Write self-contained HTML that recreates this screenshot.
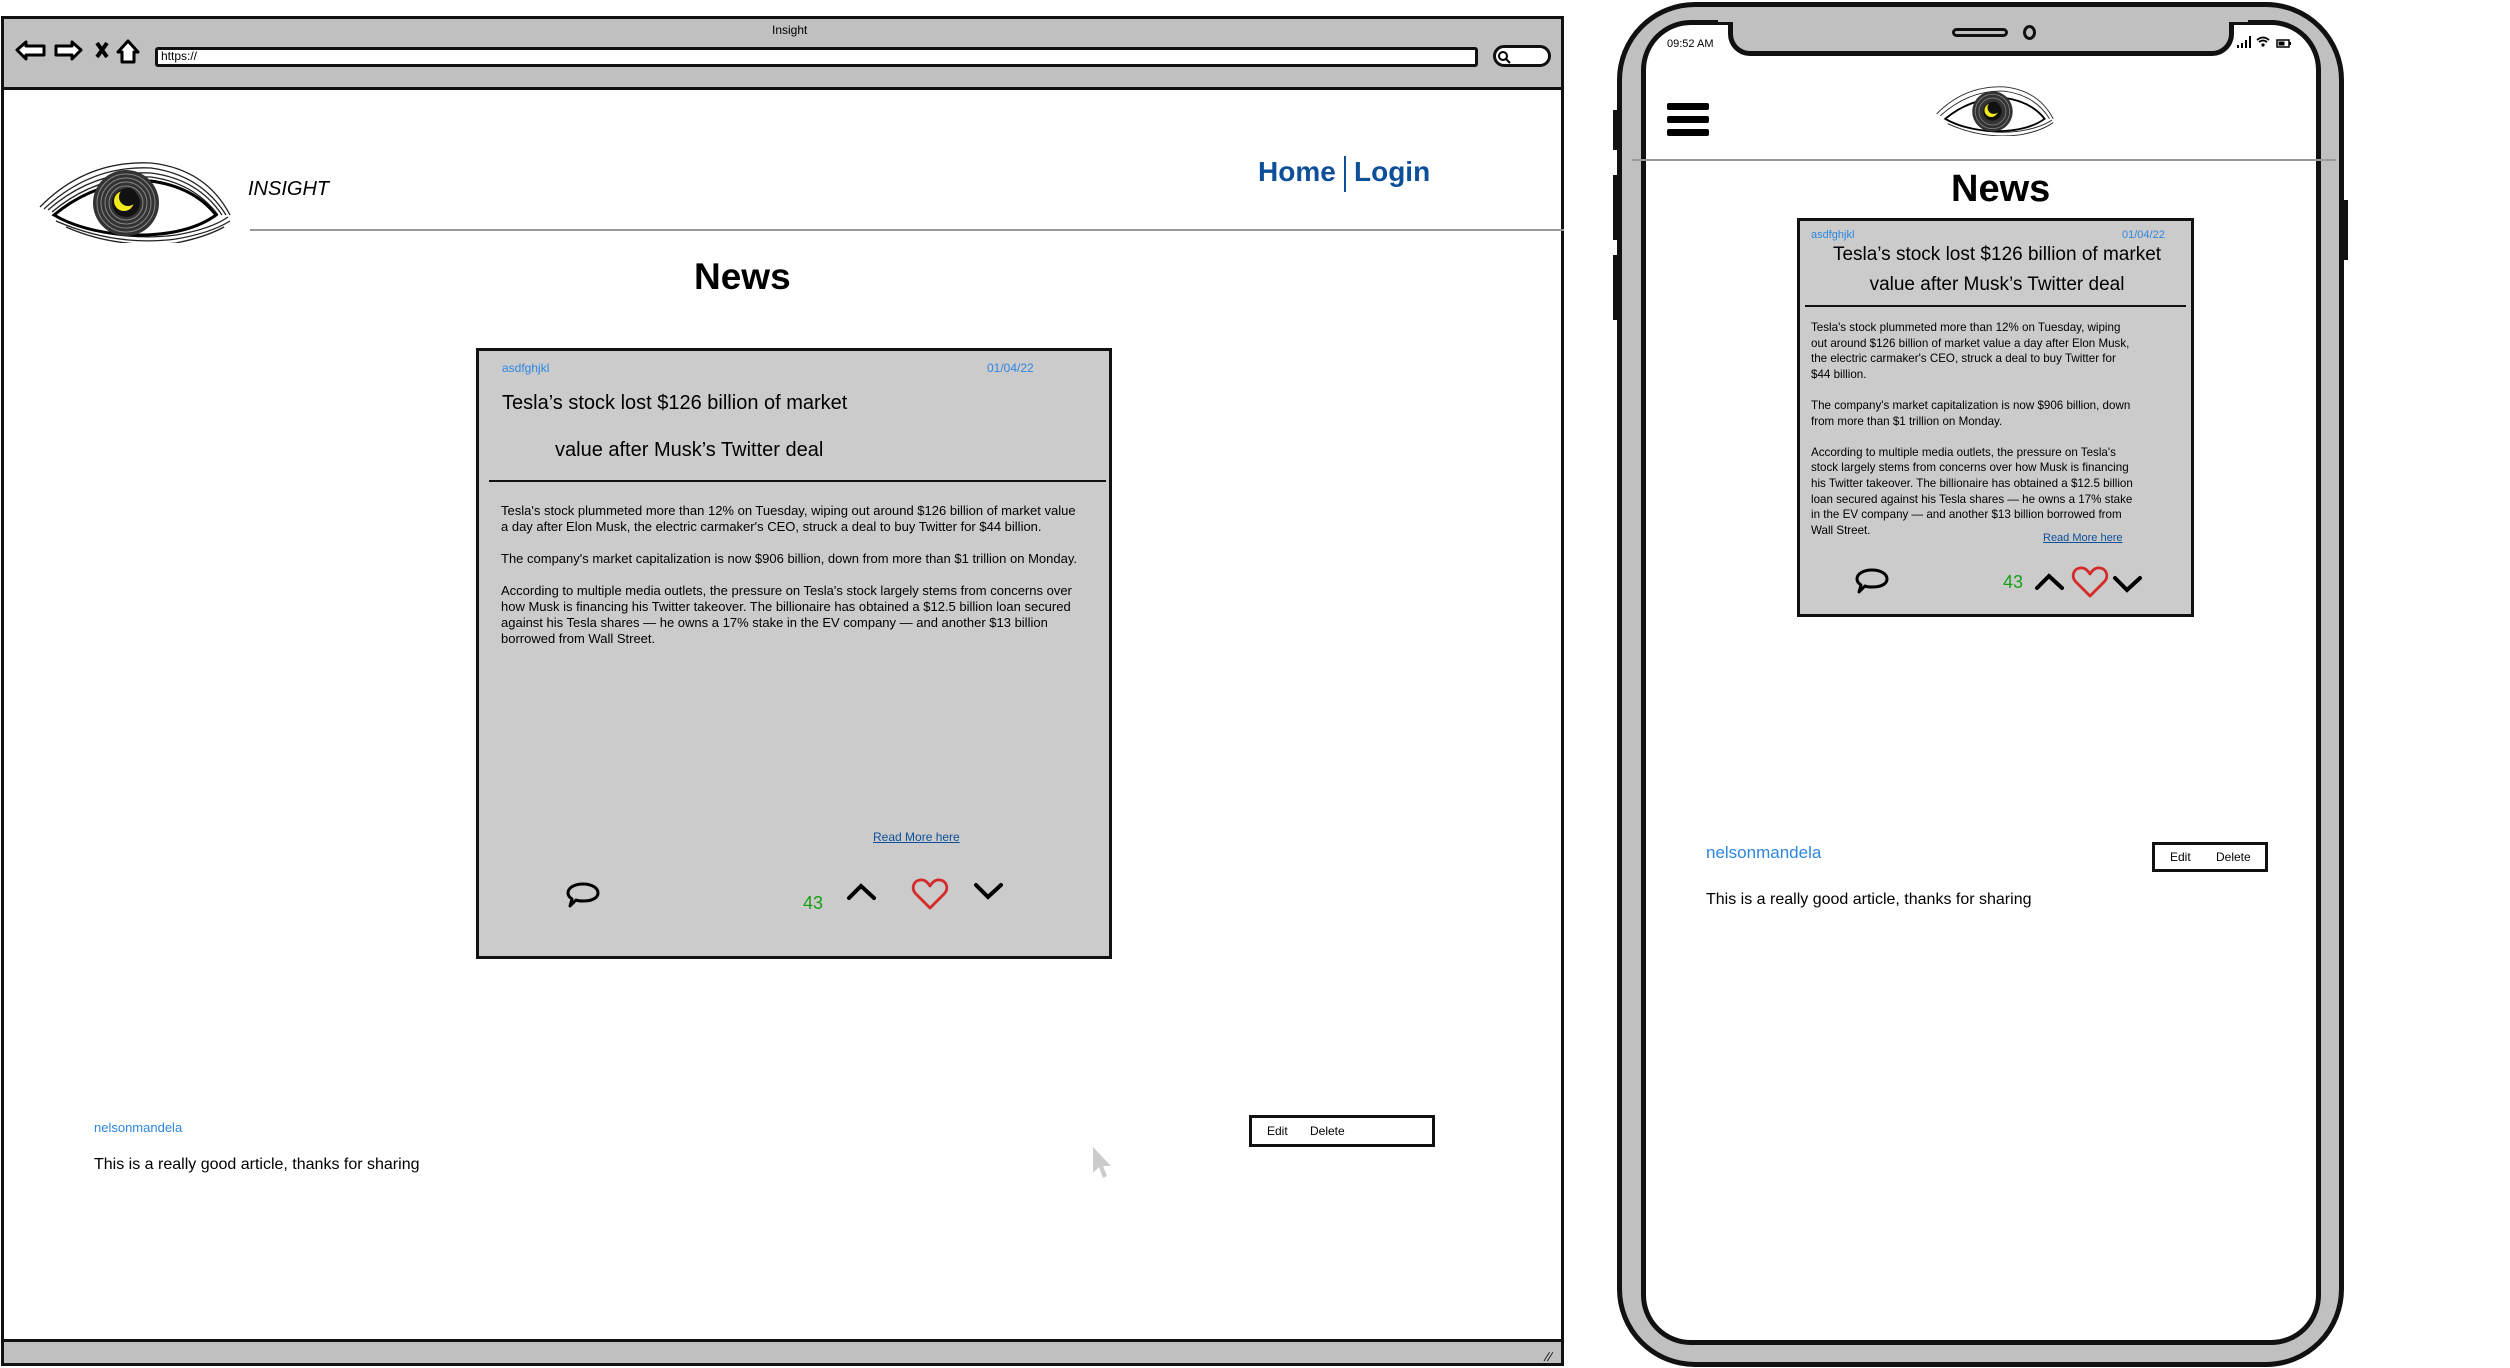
<!DOCTYPE html>
<html><head><meta charset="utf-8"><style>
*{margin:0;padding:0;box-sizing:border-box}
body{width:2510px;height:1368px;background:#fff;position:relative;overflow:hidden;font-family:"Liberation Sans",sans-serif;color:#000}
.a{position:absolute;white-space:nowrap}
.blue{color:#2e86e0}
.body{font-size:13px;line-height:16px}
</style></head><body>

<!-- Browser frame -->
<div class="a" style="left:1px;top:16px;width:1563px;height:1350px;border:3px solid #111;background:#fff"></div>
<div class="a" style="left:1px;top:16px;width:1563px;height:74px;border:3px solid #111;background:#c0c0c0"></div>
<div class="a" style="left:1px;top:1339px;width:1563px;height:27px;border:3px solid #111;background:#c0c0c0"></div>
<div class="a" style="left:1545px;top:1350px;font-size:12px;transform:skewX(-20deg)">//</div>
<div class="a" style="left:772px;top:23px;font-size:12px">Insight</div>
<svg class="a" style="left:12px;top:38px" width="135" height="28" viewBox="0 0 135 28">
<path d="M5 12 L14 4 L14 8 L32 8 L32 17 L14 17 L14 21 Z" fill="#fff" stroke="#000" stroke-width="3" stroke-linejoin="round"/>
<path d="M69 12 L60 4 L60 8 L44 8 L44 17 L60 17 L60 21 Z" fill="#fff" stroke="#000" stroke-width="3" stroke-linejoin="round"/>
<path d="M85 5 L95 19 M95 5 L85 19" stroke="#000" stroke-width="4"/>
<path d="M116 3 L106 14 L110 14 L110 24 L122 24 L122 14 L126 14 Z" fill="#fff" stroke="#000" stroke-width="3" stroke-linejoin="round"/>
</svg>
<div class="a" style="left:155px;top:47px;width:1323px;height:20px;border:3px solid #111;border-radius:3px;background:#fff"></div>
<div class="a" style="left:161px;top:49px;font-size:12px">https://</div>
<div class="a" style="left:1493px;top:45px;width:58px;height:22px;border:3px solid #111;border-radius:11px;background:#fff"></div>
<svg class="a" style="left:1497px;top:50px" width="14" height="14"><circle cx="6" cy="6" r="4" fill="none" stroke="#000" stroke-width="2"/><path d="M9 9 L13 13" stroke="#000" stroke-width="2"/></svg>

<!-- eye logo browser -->
<svg class="a" style="left:36px;top:155px" width="195" height="88" viewBox="0 0 195 88">
<g fill="none" stroke="#222" stroke-width="1.3">
<path d="M4 52 Q50 5 115 8 Q170 14 194 60"/>
<path d="M8 54 Q55 10 115 13 Q165 20 190 60"/>
<path d="M12 55 Q58 15 115 18 Q162 24 186 60"/>
<path d="M16 57 Q60 20 115 22 Q158 28 182 60"/>
<path d="M20 60 Q60 28 115 27 Q155 32 178 60"/>
<path d="M24 62 Q80 88 140 80 Q175 74 192 62"/>
<path d="M20 66 Q80 92 140 84 Q175 78 194 66"/>
<path d="M30 72 Q80 94 140 88 Q170 82 188 72"/>
</g>
<path d="M18 60 Q60 25 115 26 Q158 32 180 60 Q150 82 90 80 Q45 76 18 60 Z" fill="#fff" stroke="#000" stroke-width="3"/>
<circle cx="90" cy="48" r="33" fill="#333"/>
<g fill="none" stroke="#888" stroke-width="1"><circle cx="90" cy="48" r="29"/><circle cx="90" cy="48" r="25"/><circle cx="90" cy="48" r="21"/><circle cx="90" cy="48" r="17"/></g>
<circle cx="90" cy="48" r="14" fill="#111"/>
<circle cx="88" cy="46" r="10" fill="#f2ea1a"/>
<circle cx="92" cy="42" r="9" fill="#111"/>
</svg>
<div class="a" style="left:248px;top:178px;font-size:20px;font-style:italic">INSIGHT</div>
<div class="a" style="left:1258px;top:156px;font-size:28px;font-weight:bold;color:#0d4f99">Home</div>
<div class="a" style="left:1344px;top:156px;width:2px;height:36px;background:#0d4f99"></div>
<div class="a" style="left:1354px;top:156px;font-size:28px;font-weight:bold;color:#0d4f99">Login</div>
<div class="a" style="left:250px;top:229px;width:1314px;height:2px;background:#999"></div>
<div class="a" style="left:694px;top:256px;font-size:37px;font-weight:bold">News</div>

<!-- card browser -->
<div class="a" style="left:476px;top:348px;width:636px;height:611px;border:3px solid #111;background:#cbcbcb"></div>
<div class="a blue" style="left:502px;top:361px;font-size:12px">asdfghjkl</div>
<div class="a blue" style="left:987px;top:361px;font-size:12px">01/04/22</div>
<div class="a" style="left:502px;top:392px;font-size:20px">Tesla’s stock lost $126 billion of market</div>
<div class="a" style="left:555px;top:439px;font-size:20px">value after Musk’s Twitter deal</div>
<div class="a" style="left:489px;top:480px;width:617px;height:2px;background:#111"></div>
<div class="a body" style="left:501px;top:503px">Tesla's stock plummeted more than 12% on Tuesday, wiping out around $126 billion of market value<br>a day after Elon Musk, the electric carmaker's CEO, struck a deal to buy Twitter for $44 billion.<br><br>The company's market capitalization is now $906 billion, down from more than $1 trillion on Monday.<br><br>According to multiple media outlets, the pressure on Tesla's stock largely stems from concerns over<br>how Musk is financing his Twitter takeover. The billionaire has obtained a $12.5 billion loan secured<br>against his Tesla shares — he owns a 17% stake in the EV company — and another $13 billion<br>borrowed from Wall Street.</div>
<div class="a" style="left:873px;top:830px;font-size:12px;color:#0d4f99;text-decoration:underline">Read More here</div>
<svg class="a" style="left:566px;top:881px" width="34" height="28" viewBox="0 0 34 28"><path d="M17 3 C26 3 32 7 32 12 C32 17 26 20 17 20 C14 20 12 20 10 19 L4 25 L6 18 C3 16 2 14 2 12 C2 7 8 3 17 3 Z" fill="none" stroke="#000" stroke-width="3" stroke-linejoin="round"/></svg>
<div class="a" style="left:803px;top:893px;font-size:18px;color:#17a017">43</div>
<svg class="a" style="left:846px;top:882px" width="32" height="20"><path d="M3 16 L15 4 L28 16" fill="none" stroke="#000" stroke-width="4" stroke-linecap="round"/></svg>
<svg class="a" style="left:911px;top:877px" width="38" height="34" viewBox="0 0 38 34"><path d="M19 31 L5 17 C0 12 2 4 9 3 C14 2 17 6 19 9 C21 6 24 2 29 3 C36 4 38 12 33 17 Z" fill="none" stroke="#d42a2a" stroke-width="2.8" stroke-linejoin="round"/></svg>
<svg class="a" style="left:973px;top:881px" width="32" height="20"><path d="M3 4 L15 16 L28 4" fill="none" stroke="#000" stroke-width="4" stroke-linecap="round"/></svg>

<div class="a blue" style="left:94px;top:1120px;font-size:13px">nelsonmandela</div>
<div class="a" style="left:94px;top:1156px;font-size:16px">This is a really good article, thanks for sharing</div>
<div class="a" style="left:1249px;top:1115px;width:186px;height:32px;border:3px solid #111;background:#fff"></div>
<div class="a" style="left:1267px;top:1124px;font-size:12px">Edit</div>
<div class="a" style="left:1310px;top:1124px;font-size:12px">Delete</div>
<svg class="a" style="left:1090px;top:1145px" width="24" height="36"><path d="M3 2 L3 28 L9 22 L13 33 L17 31 L13 21 L21 21 Z" fill="#ccc"/></svg>

<!-- Phone -->
<div class="a" style="left:1617px;top:2px;width:727px;height:1365px;border:5px solid #111;border-radius:78px;background:#c0c0c0"></div>
<div class="a" style="left:1613px;top:110px;width:6px;height:40px;background:#111"></div>
<div class="a" style="left:1613px;top:175px;width:6px;height:65px;background:#111"></div>
<div class="a" style="left:1613px;top:255px;width:6px;height:65px;background:#111"></div>
<div class="a" style="left:2342px;top:200px;width:6px;height:60px;background:#111"></div>
<div class="a" style="left:1641px;top:20px;width:680px;height:1325px;border:5px solid #111;border-radius:50px;background:#fff"></div>
<div class="a" style="left:1728px;top:14px;width:506px;height:42px;border:5px solid #111;border-top:none;border-radius:0 0 22px 22px;background:#c0c0c0"></div>
<div class="a" style="left:1718px;top:12px;width:530px;height:10px;background:#c0c0c0"></div>
<div class="a" style="left:1952px;top:28px;width:56px;height:9px;border:3px solid #111;border-radius:5px;background:#c0c0c0"></div>
<div class="a" style="left:2023px;top:25px;width:13px;height:15px;border:3px solid #111;border-radius:50%"></div>
<div class="a" style="left:1667px;top:38px;font-size:11px">09:52 AM</div>
<svg class="a" style="left:2236px;top:34px" width="60" height="16"><g fill="#000"><rect x="1" y="11" width="2" height="3"/><rect x="5" y="9" width="2" height="5"/><rect x="9" y="6" width="2" height="8"/><rect x="13" y="2" width="2" height="12"/></g><path d="M21 6 Q27 1 33 6 M23 8 Q27 5 31 8" fill="none" stroke="#000" stroke-width="1.8"/><circle cx="27" cy="11" r="1.6"/><rect x="41" y="6" width="12" height="7" fill="none" stroke="#000" stroke-width="1.5"/><rect x="42.5" y="7.5" width="6" height="4"/><rect x="53" y="8" width="2" height="3"/></svg>
<div class="a" style="left:1667px;top:103px;width:42px;height:7px;background:#000;border-radius:2px"></div>
<div class="a" style="left:1667px;top:116px;width:42px;height:7px;background:#000;border-radius:2px"></div>
<div class="a" style="left:1667px;top:129px;width:42px;height:7px;background:#000;border-radius:2px"></div>
<svg class="a" style="left:1934px;top:82px" width="120" height="54" viewBox="0 0 195 88">
<g fill="none" stroke="#222" stroke-width="1.5">
<path d="M4 52 Q50 5 115 8 Q170 14 194 60"/><path d="M10 55 Q58 12 115 15 Q165 22 188 60"/><path d="M24 62 Q80 88 140 80 Q175 74 192 62"/><path d="M22 68 Q80 94 140 86 Q175 80 194 66"/></g>
<path d="M18 60 Q60 25 115 26 Q158 32 180 60 Q150 82 90 80 Q45 76 18 60 Z" fill="#fff" stroke="#000" stroke-width="3"/>
<circle cx="95" cy="48" r="33" fill="#333"/>
<g fill="none" stroke="#888" stroke-width="1.2"><circle cx="95" cy="48" r="28"/><circle cx="95" cy="48" r="22"/></g>
<circle cx="95" cy="48" r="15" fill="#111"/>
<circle cx="93" cy="46" r="11" fill="#f2ea1a"/>
<circle cx="97" cy="42" r="10" fill="#111"/>
</svg>
<div class="a" style="left:1632px;top:159px;width:704px;height:2px;background:#999"></div>
<div class="a" style="left:1951px;top:168px;font-size:38px;font-weight:bold">News</div>

<div class="a" style="left:1797px;top:218px;width:397px;height:399px;border:3px solid #111;background:#cbcbcb"></div>
<div class="a blue" style="left:1811px;top:229px;font-size:11px">asdfghjkl</div>
<div class="a blue" style="left:2122px;top:229px;font-size:11px">01/04/22</div>
<div class="a" style="left:1803px;top:244px;width:388px;text-align:center;font-size:19px">Tesla’s stock lost $126 billion of market</div>
<div class="a" style="left:1803px;top:274px;width:388px;text-align:center;font-size:19px">value after Musk’s Twitter deal</div>
<div class="a" style="left:1805px;top:305px;width:381px;height:2px;background:#111"></div>
<div class="a" style="left:1811px;top:320px;font-size:11.6px;line-height:15.6px">Tesla's stock plummeted more than 12% on Tuesday, wiping<br>out around $126 billion of market value a day after Elon Musk,<br>the electric carmaker's CEO, struck a deal to buy Twitter for<br>$44 billion.<br><br>The company's market capitalization is now $906 billion, down<br>from more than $1 trillion on Monday.<br><br>According to multiple media outlets, the pressure on Tesla's<br>stock largely stems from concerns over how Musk is financing<br>his Twitter takeover. The billionaire has obtained a $12.5 billion<br>loan secured against his Tesla shares — he owns a 17% stake<br>in the EV company — and another $13 billion borrowed from<br>Wall Street.</div>
<div class="a" style="left:2043px;top:532px;font-size:11px;color:#0d4f99;text-decoration:underline">Read More here</div>
<svg class="a" style="left:1855px;top:567px" width="34" height="28" viewBox="0 0 34 28"><path d="M17 3 C26 3 32 7 32 12 C32 17 26 20 17 20 C14 20 12 20 10 19 L4 25 L6 18 C3 16 2 14 2 12 C2 7 8 3 17 3 Z" fill="none" stroke="#000" stroke-width="3" stroke-linejoin="round"/></svg>
<div class="a" style="left:2003px;top:572px;font-size:18px;color:#17a017">43</div>
<svg class="a" style="left:2034px;top:572px" width="32" height="20"><path d="M3 16 L15 4 L28 16" fill="none" stroke="#000" stroke-width="4" stroke-linecap="round"/></svg>
<svg class="a" style="left:2071px;top:565px" width="38" height="34" viewBox="0 0 38 34"><path d="M19 31 L5 17 C0 12 2 4 9 3 C14 2 17 6 19 9 C21 6 24 2 29 3 C36 4 38 12 33 17 Z" fill="none" stroke="#d42a2a" stroke-width="2.8" stroke-linejoin="round"/></svg>
<svg class="a" style="left:2112px;top:574px" width="32" height="20"><path d="M3 4 L15 16 L28 4" fill="none" stroke="#000" stroke-width="4" stroke-linecap="round"/></svg>

<div class="a blue" style="left:1706px;top:843px;font-size:17px">nelsonmandela</div>
<div class="a" style="left:1706px;top:891px;font-size:16px">This is a really good article, thanks for sharing</div>
<div class="a" style="left:2152px;top:842px;width:116px;height:30px;border:3px solid #111;background:#fff"></div>
<div class="a" style="left:2170px;top:850px;font-size:12px">Edit</div>
<div class="a" style="left:2216px;top:850px;font-size:12px">Delete</div>
</body></html>
